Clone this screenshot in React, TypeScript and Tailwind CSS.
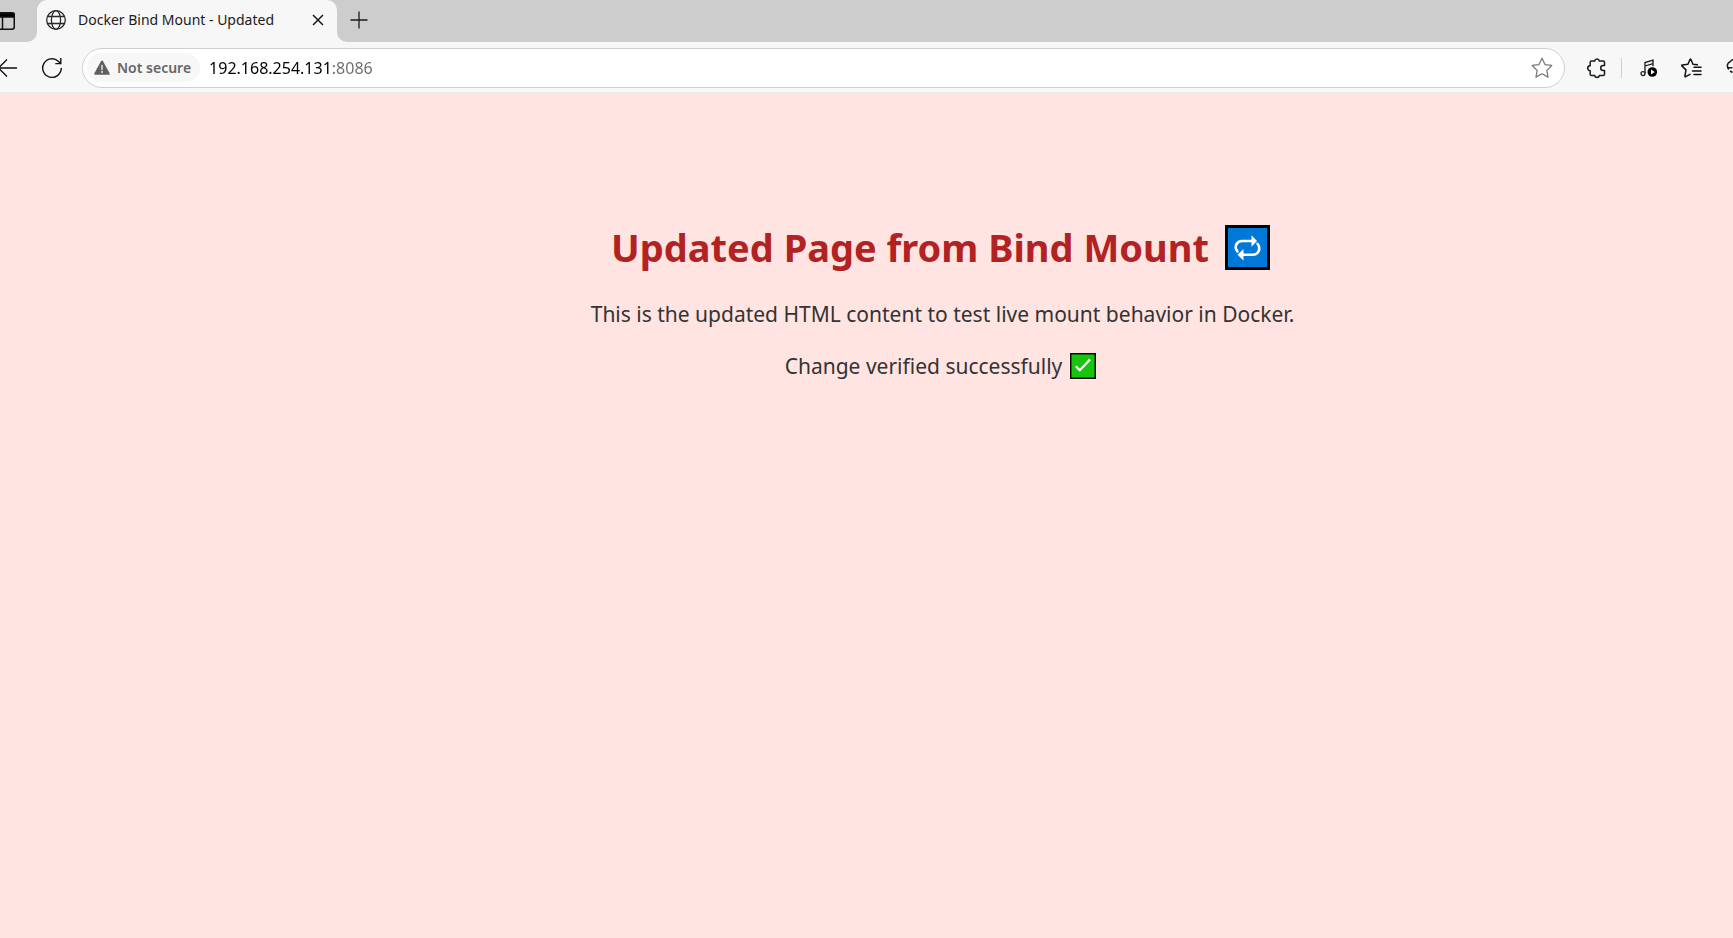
import { useState } from "react";

function TabActionsIcon() {
  return (
    <svg className="h-5 w-5" viewBox="0 0 20 20" fill="none" stroke="#111" strokeWidth="1.5">
      <rect x="1.75" y="1.75" width="16.5" height="16.5" rx="2.5" />
      <path d="M2 2.5h16v3.5H2z" fill="#000" />
      <path d="M6.5 6v12" />
    </svg>
  );
}

function GlobeIcon() {
  return (
    <svg className="h-5 w-5" viewBox="0 0 20 20" fill="none" stroke="#2a2a2a" strokeWidth="1.3">
      <circle cx="10" cy="10" r="9.3" />
      <ellipse cx="10" cy="10" rx="4.6" ry="9.3" />
      <path d="M1.6 6.5h16.8M1.6 13.5h16.8" />
    </svg>
  );
}

function CloseIcon() {
  return (
    <svg className="h-3 w-3" viewBox="0 0 12 12" stroke="#1a1a1a" strokeWidth="1.5">
      <path d="M1 1l10 10M11 1L1 11" />
    </svg>
  );
}

function PlusIcon() {
  return (
    <svg className="h-[18px] w-[18px]" viewBox="0 0 18 18" stroke="#1a1a1a" strokeWidth="1.3">
      <path d="M9 .5v17M.5 9h17" />
    </svg>
  );
}

function BackIcon() {
  return (
    <svg className="h-5 w-5" viewBox="0 0 20 20" fill="none" stroke="#111" strokeWidth="1.3">
      <path d="M20 10H1.5M10 1.5L1.5 10l8.500 8.500" />
    </svg>
  );
}

function ReloadIcon() {
  return (
    <svg className="h-[22px] w-[22px]" viewBox="0 0 22 22" fill="none" stroke="#111" strokeWidth="1.4">
      <path d="M20.300 11a9.300 9.300 0 1 1-3-6.800l2.200 2.200" />
      <path d="M19.800 1v5.600h-5.500" />
    </svg>
  );
}

function WarningIcon() {
  return (
    <svg className="h-4 w-4" viewBox="0 0 16 16">
      <path d="M7 1.300a1.200 1.200 0 0 1 2 0l6.500 11.800a1.200 1.200 0 0 1-1 1.700H1.500a1.200 1.200 0 0 1-1-1.700z" fill="#606060" />
      <path d="M8 5.500v4" stroke="#f7f7f7" strokeWidth="1.3" strokeLinecap="round" />
      <circle cx="8" cy="12" r=".9" fill="#f7f7f7" />
    </svg>
  );
}

const STAR = "M10 1.200l2.700 5.700 6.200.8-4.500 4.400 1.100 6.200L10 15.300l-5.500 3 1.100-6.200L1.100 7.700l6.200-.8z";

function StarIcon() {
  return (
    <svg className="h-[22px] w-[22px]" viewBox="0 0 20 20" fill="none" stroke="#757575" strokeWidth="1.1" strokeLinejoin="round">
      <path d={STAR} />
    </svg>
  );
}

function ExtensionsIcon() {
  return (
    <svg className="h-[22px] w-[22px]" viewBox="0 0 22 22" fill="none" stroke="#1a1a1a" strokeWidth="1.500" strokeLinejoin="round">
      <path d="M5.500 4h3.200a2.400 2.400 0 0 1 4.700 0h3.800q1.300 0 1.300 1.300v3.200h-1.300a2.400 2.400 0 0 0 0 5h1.300v3.700q0 1.300-1.300 1.300h-3.800a2.400 2.400 0 0 1-4.700 0H5.500q-1.300 0-1.300-1.300v-3.500a2.400 2.400 0 0 1 0-5V5.300Q4.200 4 5.500 4z" />
    </svg>
  );
}

function MediaIcon() {
  return (
    <svg className="h-[18px] w-[18px]" viewBox="0 0 18 18" fill="none" stroke="#1a1a1a" strokeWidth="1.3">
      <circle cx="3" cy="14.600" r="2" />
      <path d="M5 14.600V3.600l8-2.400v6M5 7l8-2.400" />
      <circle cx="12.300" cy="13" r="4.800" fill="#000" stroke="none" />
      <path d="M11 10.600v4.800l3.800-2.400z" fill="#fff" stroke="none" />
    </svg>
  );
}

function FavoritesIcon() {
  return (
    <svg className="h-[22px] w-[22px]" viewBox="0 0 22 22" fill="none" stroke="#111" strokeWidth="1.500" strokeLinejoin="round" strokeLinecap="round">
      <path d="M17.300 7.800l-4.300-.6-2.100-4.700q-.4-.9-.9 0L7.900 7.200l-5.700.8q-1 .1-.3.9l4.100 4-1.100 6.200q-.1 1 .8.600l4.300-2.300" />
      <path d="M14 10.200h7M12.500 13.900h8.500M14 17.600h7" />
    </svg>
  );
}

function EssentialsIcon() {
  return (
    <svg className="h-[22px] w-[22px]" viewBox="0 0 22 22" fill="none" stroke="#1a1a1a" strokeWidth="1.500">
      <path d="M2.800 12.500C.5 9.500 1 5.500 4.500 4.500 6 1 16 1 17.500 4.500c3.500.5 4 5 .5 7M1 10.800h5.500M4 14l2.500 1.500" />
    </svg>
  );
}

function RepeatEmoji() {
  return (
    <svg role="img" aria-label="repeat" className="mr-1 h-[45px] w-[45px]" viewBox="0 0 45 45">
      <rect width="45" height="45" fill="#000" />
      <rect x="3" y="3" width="39" height="39" fill="#0078d7" />
      <g fill="none" stroke="#fff" strokeWidth="2.600" strokeLinecap="round">
        <path d="M12.500 26.500C8.500 21.500 12 16 17 16H28" />
        <path d="M32.500 18.800C36.500 24 33 29.700 28 29.700H17" />
      </g>
      <path d="M26.500 10.300l5.500 5.700-5.500 5.700zM18.500 24l-6 5.700 6 5.700z" fill="#fff" />
    </svg>
  );
}

function CheckEmoji() {
  return (
    <svg role="img" aria-label="check" className="mr-1 h-[26px] w-[26px]" viewBox="0 0 26 26">
      <rect width="26" height="26" fill="#0a0a0a" />
      <rect x="1.500" y="1.500" width="23" height="23" fill="#16c60c" />
      <path d="M5.800 13.200l4 4L20 6.500" fill="none" stroke="#fff" strokeWidth="2.300" />
    </svg>
  );
}

function TabStrip() {
  return (
    <div className="flex h-[42px]">
      <div className="flex w-[37px] shrink-0 items-center rounded-br-[10px] bg-[#cdcdcd]">
        <button aria-label="Tab actions" className="-ml-1">
          <TabActionsIcon />
        </button>
      </div>
      <div className="w-[300px] shrink-0 bg-[#cdcdcd]">
        <div className="flex h-full items-center rounded-t-[10px] bg-[#f7f7f7] pb-0.5 pl-[9px] pr-[13px]">
          <GlobeIcon />
          <span className="ml-3 flex-1 whitespace-nowrap pb-0.5 text-[14px] text-[#1b1b1b]">Docker Bind Mount - Updated</span>
          <button aria-label="Close tab">
            <CloseIcon />
          </button>
        </div>
      </div>
      <div className="flex flex-1 items-center rounded-bl-[10px] bg-[#cdcdcd] pb-[3px] pl-[13px]">
        <button aria-label="New tab">
          <PlusIcon />
        </button>
      </div>
    </div>
  );
}

function Toolbar() {
  const [url, setUrl] = useState("192.168.254.131:8086");
  return (
    <div className="flex h-[51px] items-center overflow-hidden border-b border-[#ececec] pt-px">
      <button aria-label="Back" className="-ml-[3px] shrink-0">
        <BackIcon />
      </button>
      <button aria-label="Reload" className="ml-6 shrink-0">
        <ReloadIcon />
      </button>
      <div className="ml-[19px] flex h-10 flex-1 items-center rounded-full border border-[#cfcfcf] bg-white pl-1 pr-[11px]">
        <button className="flex h-[29px] shrink-0 items-center gap-[7px] rounded-full bg-[#f7f7f7] pl-[7px] pr-[9px] text-[14px] font-semibold text-[#666]">
          <WarningIcon />
          Not secure
        </button>
        <input
          aria-label="Address"
          value={url}
          onChange={(e) => setUrl(e.target.value)}
          className="ml-[9px] min-w-0 flex-1 bg-[linear-gradient(to_right,#000_123px,#6b6b6b_123px)] bg-clip-text text-[16px] text-transparent caret-black outline-none"
        />
        <button aria-label="Add to favorites">
          <StarIcon />
        </button>
      </div>
      <div className="ml-[21px] flex w-[147px] shrink-0 items-center">
        <button aria-label="Extensions" className="shrink-0">
          <ExtensionsIcon />
        </button>
        <span className="ml-[13px] h-5 w-px shrink-0 bg-[#cfcfcf]" />
        <button aria-label="Media controls" className="ml-[18px] shrink-0">
          <MediaIcon />
        </button>
        <button aria-label="Favorites" className="ml-[22px] shrink-0">
          <FavoritesIcon />
        </button>
        <button aria-label="Browser essentials" className="ml-6 shrink-0">
          <EssentialsIcon />
        </button>
      </div>
    </div>
  );
}

export default function App() {
  return (
    <div className="flex min-h-screen flex-col overflow-hidden bg-[#ffe4e1] font-['Noto_Sans','Open_Sans',sans-serif]">
      <header className="bg-[#f7f7f7]">
        <TabStrip />
        <Toolbar />
      </header>
      <main className="flex flex-1 flex-col items-center pl-[152px] pt-[124px] text-[21px] leading-[30px] text-[#333]">
        <h1 className="flex items-center gap-4 text-[38px] font-bold leading-[60px] text-[#b22222]">
          Updated Page from Bind Mount
          <RepeatEmoji />
        </h1>
        <p className="mt-[22px]">This is the updated HTML content to test live mount behavior in Docker.</p>
        <p className="mt-[22px] flex items-center gap-2">
          Change verified successfully
          <CheckEmoji />
        </p>
      </main>
    </div>
  );
}
